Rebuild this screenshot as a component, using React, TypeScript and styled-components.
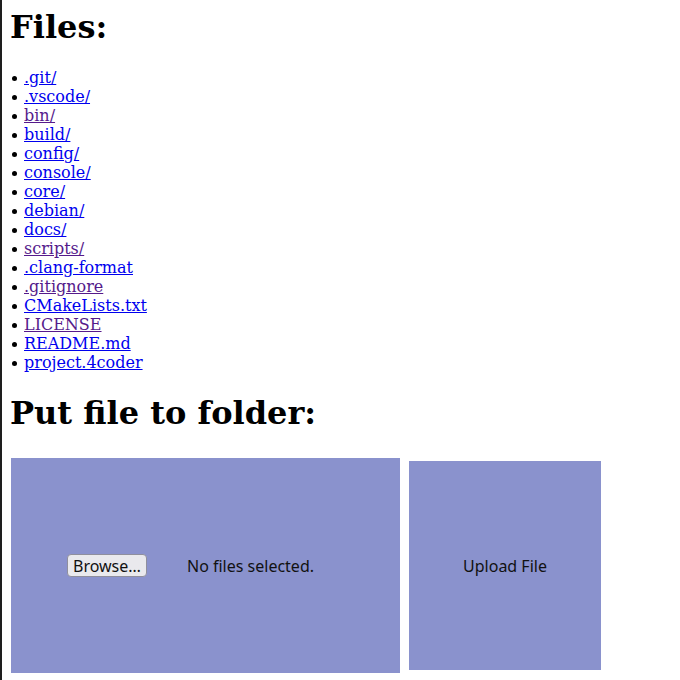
import React from "react";
import styled, { createGlobalStyle } from "styled-components";

const Global = createGlobalStyle`
  html {
    border-left: 2px solid #1e1e1e;
    min-height: 100%;
    box-sizing: border-box;
  }
  html, body { height: 100%; }
  body {
    margin: 0;
    padding: 9px 8px 8px 8px;
    background: #ffffff;
    color: #000000;
    font-family: "DejaVu Serif", serif;
    font-size: 16px;
    box-sizing: border-box;
  }
`;

const Heading = styled.h1<{ $top?: number }>`
  font-family: "DejaVu Serif", serif;
  font-size: 32px;
  font-weight: bold;
  line-height: 37px;
  margin: ${(p) => p.$top ?? 0}px 0 22px 0;
`;

const FileList = styled.ul`
  margin: 0;
  padding: 0 0 0 14px;
  list-style: none;
  line-height: 19px;
`;

const Item = styled.li`
  &::before {
    content: "";
    display: inline-block;
    width: 5px;
    height: 5px;
    border-radius: 50%;
    background: #000;
    margin-left: -12px;
    margin-right: 7px;
    vertical-align: 2px;
  }
`;

const FileLink = styled.a<{ $visited?: boolean }>`
  color: ${(p) => (p.$visited ? "#551a8b" : "#0000ee")};
  text-decoration: underline;
`;

const UploadForm = styled.form`
  display: flex;
  align-items: center;
  gap: 9px;
  margin: 26px 0 0 1px;
`;

const PickerBox = styled.div`
  width: 389px;
  height: 215px;
  background: #8a92cd;
  display: flex;
  align-items: center;
  gap: 40px;
  padding-left: 56px;
  box-sizing: border-box;
  font-family: "Noto Sans", sans-serif;
  font-size: 16px;
  color: #111;
`;

const BrowseButton = styled.button`
  font-family: "Noto Sans", sans-serif;
  font-size: 16px;
  color: #111;
  background: #e9e9ed;
  border: 1px solid #8f8f9d;
  border-radius: 4px;
  height: 23px;
  padding: 0 5px;
  display: flex;
  align-items: center;
  cursor: pointer;
`;

const Status = styled.span``;

const SubmitBox = styled.button`
  width: 192px;
  height: 209px;
  background: #8a92cd;
  border: none;
  font-family: "Noto Sans", sans-serif;
  font-size: 16px;
  color: #111;
  padding: 0;
  cursor: pointer;
`;

const files: [string, boolean][] = [
  [".git/", false],
  [".vscode/", false],
  ["bin/", true],
  ["build/", false],
  ["config/", false],
  ["console/", false],
  ["core/", false],
  ["debian/", false],
  ["docs/", false],
  ["scripts/", true],
  [".clang-format", false],
  [".gitignore", true],
  ["CMakeLists.txt", false],
  ["LICENSE", true],
  ["README.md", false],
  ["project.4coder", false],
];

export default function App() {
  return (
    <>
      <Global />
      <Heading>Files:</Heading>
      <FileList>
        {files.map(([name, visited]) => (
          <Item key={name}>
            <FileLink href="#" $visited={visited}>
              {name}
            </FileLink>
          </Item>
        ))}
      </FileList>
      <Heading $top={23}>Put file to folder:</Heading>
      <UploadForm onSubmit={(e) => e.preventDefault()}>
        <PickerBox>
          <BrowseButton type="button">Browse…</BrowseButton>
          <Status>No files selected.</Status>
        </PickerBox>
        <SubmitBox type="submit">Upload File</SubmitBox>
      </UploadForm>
    </>
  );
}
